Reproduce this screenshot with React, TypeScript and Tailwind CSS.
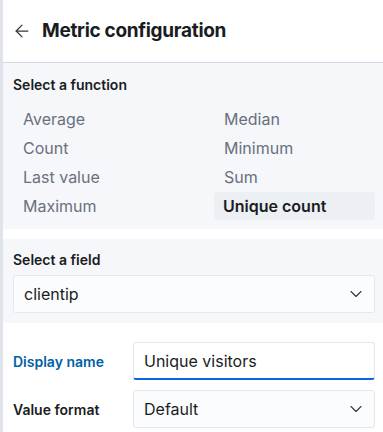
import { ArrowLeft, ChevronDown } from "lucide-react";

const functions = [
  ["Average", "Median"],
  ["Count", "Minimum"],
  ["Last value", "Sum"],
  ["Maximum", "Unique count"],
];

function Option({ label, selected }: { label: string; selected?: boolean }) {
  return (
    <div
      className={
        selected
          ? "flex h-7 items-center rounded-[4px] bg-[#eceff4] px-[9px] font-semibold text-[#1a1c21]"
          : "flex h-7 items-center px-[10px] text-[#69707d]"
      }
    >
      {label}
    </div>
  );
}

export default function App() {
  return (
    <div
      className="h-[432px] w-[383px] overflow-hidden border-l-[3px] border-[#dfe3ea] bg-white text-[#1a1c21]"
      style={{ fontFamily: "Inter, 'Noto Sans', sans-serif" }}
    >
      {/* Header */}

      <div className="flex h-[63px] items-center gap-[10px] border-b border-[#d3dae6] pl-[9px]">
        <ArrowLeft size={20} strokeWidth={1.5} className="text-[#343741]" />
        <h2 className="text-[19px] font-bold tracking-[-0.3px]">
          Metric configuration
        </h2>
      </div>

      {/* Function */}

      <div className="bg-[#f5f7fa] pt-3 pb-[9px] pl-[10px] pr-[8px]">
        <h3 className="text-[14px] leading-5 font-semibold">
          Select a function
        </h3>

        <div className="mt-[10px] grid grid-cols-2 gap-x-10 gap-y-px text-[16px]">
          {functions.map(([left, right]) => (
            <div key={left} className="contents">
              <Option label={left} />
              <Option label={right} selected={right === "Unique count"} />
            </div>
          ))}
        </div>
      </div>

      {/* Field */}

      <div className="mt-[10px] bg-[#f5f7fa] pt-[11px] pb-[10px] pl-[10px] pr-[8px]">
        <h3 className="text-[14px] leading-5 font-semibold">Select a field</h3>

        <div className="mt-[5px] flex h-[38px] items-center justify-between rounded-[3px] border border-[#e4e8ee] bg-[#fbfcfd] pl-[10px] pr-[8px] text-[16px]">
          <span>clientip</span>
          <ChevronDown size={20} strokeWidth={1.3} className="text-[#343741]" />
        </div>
      </div>

      {/* Display options */}

      <div className="space-y-[10px] pt-[19px] pl-[10px] pr-[8px]">
        <div className="flex items-center">
          <label className="w-[120px] shrink-0 text-[14px] font-semibold text-[#0061a6]">
            Display name
          </label>
          <div className="flex h-[38px] flex-1 items-center rounded-[3px] border border-[#e4e8ee] border-b-2 border-b-[#0b64dd] bg-white pl-[10px] text-[16px]">
            Unique visitors
          </div>
        </div>

        <div className="flex items-center">
          <label className="w-[120px] shrink-0 text-[14px] font-semibold">
            Value format
          </label>
          <div className="flex h-[38px] flex-1 items-center justify-between rounded-[3px] border border-[#e4e8ee] bg-[#fbfcfd] pl-[10px] pr-[8px] text-[16px]">
            <span>Default</span>
            <ChevronDown size={20} strokeWidth={1.3} className="text-[#343741]" />
          </div>
        </div>
      </div>
    </div>
  );
}
